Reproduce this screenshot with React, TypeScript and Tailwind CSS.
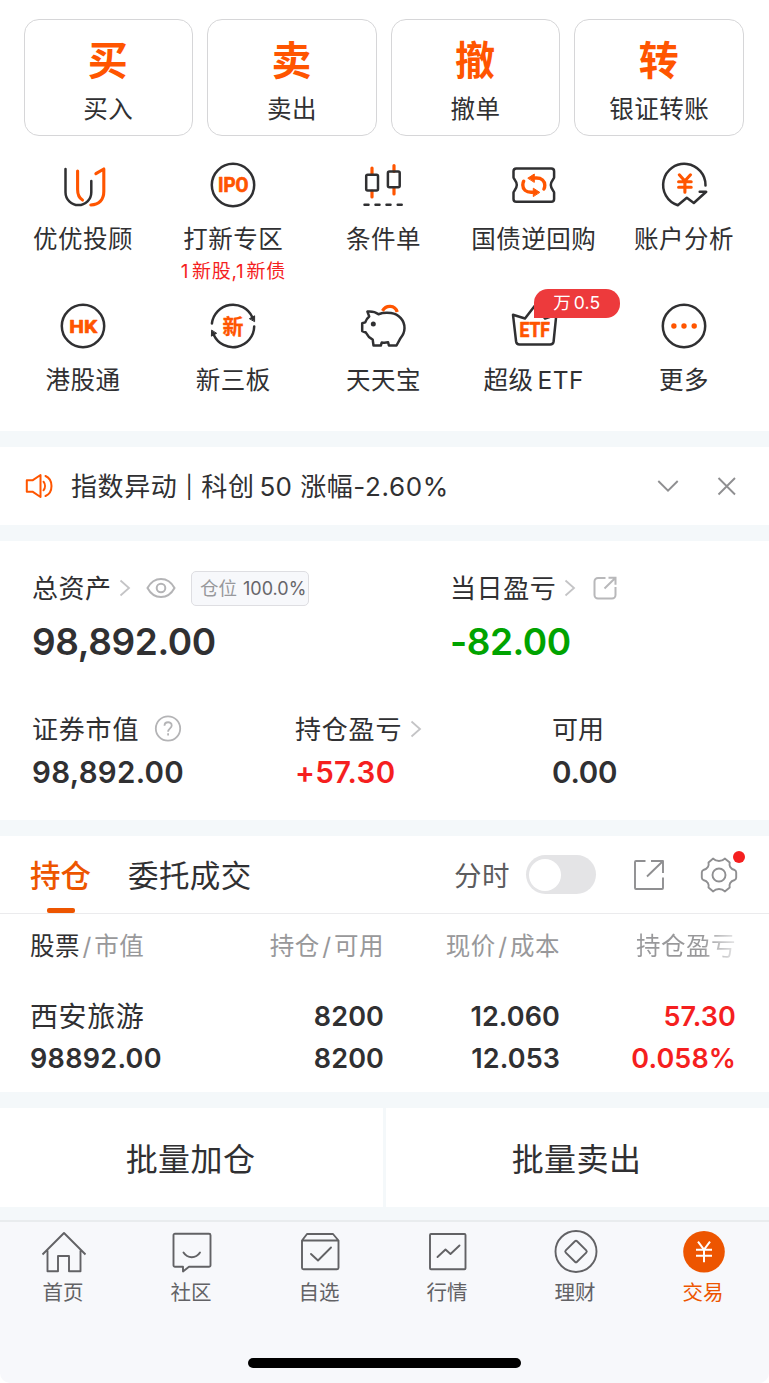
import React from "react";

const INK = "#303032";
const ORANGE = "#ff5500";

type Kids = { children: React.ReactNode };

function Glyph({ children }: Kids) {
  return (
    <svg
      viewBox="0 0 48 48"
      className="block size-12 shrink-0"
      fill="none"
      stroke={INK}
      strokeWidth={2.5}
      strokeLinecap="round"
      strokeLinejoin="round"
    >
      {children}
    </svg>
  );
}

function GlyphText({ x = 24, y, size, width, weight = 0.7, children }: Kids & { x?: number; y: number; size: number; width: number; weight?: number }) {
  return (
    <text
      x={x}
      y={y}
      fontSize={size}
      textLength={width}
      lengthAdjust="spacingAndGlyphs"
      textAnchor="middle"
      fill={ORANGE}
      stroke={ORANGE}
      strokeWidth={weight}
      fontWeight={700}
      fontFamily="Roboto, 'Noto Sans CJK SC', sans-serif"
    >
      {children}
    </text>
  );
}

const icons = {
  advisor: (
    <Glyph>
      <path d="M6.5 8v23.2a12.9 12.9 0 0 0 25.8 0V20" />
      <g stroke={ORANGE} strokeWidth={3.1}>
        <path d="M18.6 10v18.5c0 5 1.5 8.5 4.9 10.5" />
        <path d="M36.9 12.6 44.8 8v22.5c0 8-4.5 13-13 13.5" />
      </g>
    </Glyph>
  ),
  ipo: (
    <Glyph>
      <circle cx="24" cy="24" r="21.2" />
      <GlyphText x={24.2} y={30.9} size={19.5} width={30.5}>IPO</GlyphText>
    </Glyph>
  ),
  condition: (
    <Glyph>
      <g stroke={ORANGE} strokeWidth={3.2}>
        <path d="M13 7v6M13 30v6M35 4.500v6M35 27v6" />
      </g>
      <rect x="7.2" y="13.8" width="11.8" height="15.6" rx="1.5" />
      <rect x="28.9" y="10.6" width="11.8" height="15.6" rx="1.5" />
      <path d="M5.500 43.700h4M16.500 43.700h4M27.500 43.700h4M38.700 43.700h4" />
    </Glyph>
  ),
  bond: (
    <Glyph>
      <path d="M6.300 7.500h35a2.800 2.800 0 0 1 2.800 2.800v6.200c0 1.200-3.300 3.500-3.300 7.500s3.300 6.300 3.300 7.500v6.400a2.800 2.800 0 0 1-2.800 2.800h-35A2.800 2.800 0 0 1 3.500 37.900v-6.400c0-1.200 3.300-3.500 3.300-7.500S3.500 17.700 3.500 16.500v-6.200a2.800 2.800 0 0 1 2.800-2.800Z" />
      <g stroke={ORANGE} strokeWidth={3.4}>
        <path d="M25 17h1.500c5 0 8.300 3 8.300 7.300 0 1.500-.3 2.700-.9 3.700" />
        <path d="M22.600 31.200h-1.500c-5 0-8.300-3-8.300-7.300 0-1.500.3-2.700.9-3.700" />
        <path fill={ORANGE} strokeWidth={1} d="m18.100 17 6.200-4v8ZM29.500 31.200l-6.200-4v8Z" />
      </g>
    </Glyph>
  ),
  analysis: (
    <Glyph>
      <path d="M45.500 24.500A21.200 21.200 0 1 0 17.800 44.200l9-7.400 7 5.200 12.400-11.200h-6.500" />
      <path stroke={ORANGE} strokeWidth={3.1} d="m19.300 13.800 5.500 6.200 5.700-6.200M18.600 20.800h12.600M18.600 26.200h12.600M24.900 20.500v10.700" />
    </Glyph>
  ),
  hk: (
    <Glyph>
      <circle cx="24" cy="24" r="21.2" />
      <GlyphText x={24.2} y={30.8} size={19} width={28}>HK</GlyphText>
    </Glyph>
  ),
  otc: (
    <Glyph>
      <path d="M2.900 21.500A21.200 21.200 0 0 1 43.200 15M45.200 24.500A21.200 21.200 0 0 1 4.800 33" />
      <path fill={INK} strokeWidth={1} d="m40.700 16.500 4.900-2.700v5.500ZM7.300 31.500 2.400 34.200l.2-5.700Z" />
      <GlyphText y={31.5} size={21} width={21} weight={0.3}>新</GlyphText>
    </Glyph>
  ),
  piggy: (
    <Glyph>
      <path d="M19.500 12.200c4-1.400 8.500-1.600 12.500-1.100 8 1 13.600 7.500 13.500 15.100-.1 4-1.500 7-4 10l-4 7.300h-7.600l-.8-3.200c-2 .4-4.300.5-6.300.2l-1 3h-7.300l-.8-5.800c-3.200-1.700-5.300-4-6.900-7.200L3.200 29v-7.700l3-.9c.8-2.500 2-4.400 4-6L8.400 9.600c4.300-.4 8 .3 11.100 2.600Z" />
      <circle cx="14.3" cy="22" r="2.5" fill={INK} stroke="none" />
      <path stroke={ORANGE} strokeWidth={3.3} strokeLinecap="butt" d="M23.500 8.800c3.500-6 12.500-6 14.700 1.300" />
    </Glyph>
  ),
  etf: (
    <Glyph>
      <path d="m3 12.800 12 3.700L25 3.500l10 13 11.300-3.700-2.700 26.700a3.500 3.500 0 0 1-3.500 3H9.600a3.500 3.500 0 0 1-3.500-3Z" />
      <GlyphText x={24.7} y={35.4} size={19.8} width={30.5}>ETF</GlyphText>
    </Glyph>
  ),
  more: (
    <Glyph>
      <circle cx="24" cy="24" r="21.2" />
      <g fill={ORANGE} stroke="none">
        <circle cx="13.9" cy="24" r="2.7" />
        <circle cx="24" cy="24" r="2.7" />
        <circle cx="34.2" cy="24" r="2.7" />
      </g>
    </Glyph>
  ),
};

type Shortcut = { icon: React.ReactNode; label: React.ReactNode; note?: React.ReactNode; badge?: React.ReactNode };

const shortcuts: Shortcut[][] = [
  [
    { icon: icons.advisor, label: "优优投顾" },
    {
      icon: icons.ipo,
      label: "打新专区",
      note: <><span className="mr-[3px]">1</span>新股,<span className="mr-[2px]">1</span>新债</>,
    },
    { icon: icons.condition, label: "条件单" },
    { icon: icons.bond, label: "国债逆回购" },
    { icon: icons.analysis, label: "账户分析" },
  ],
  [
    { icon: icons.hk, label: "港股通" },
    { icon: icons.otc, label: "新三板" },
    { icon: icons.piggy, label: "天天宝" },
    {
      icon: icons.etf,
      label: <>超级<span className="ml-[4px] tracking-[0.5px]">ETF</span></>,
      badge: <>万<span className="ml-[3px]">0.5</span></>,
    },
    { icon: icons.more, label: "更多" },
  ],
];

const actions = [
  ["买", "买入"],
  ["卖", "卖出"],
  ["撤", "撤单"],
  ["转", "银证转账"],
];

function Gap() {
  return <div className="h-4 shrink-0 bg-[#f4f8fa]" />;
}

function Chevron() {
  return (
    <svg viewBox="0 0 12 18" className="block h-[18px] w-3 shrink-0" fill="none" stroke="#c4c4c6" strokeWidth={1.8}>
      <path d="m1.500 1.500 8.500 7.500-8.500 7.500" />
    </svg>
  );
}

function Actions() {
  return (
    <div className="grid grid-cols-4 gap-3.5 pr-[25px] pl-[23.5px]">
      {actions.map(([big, label]) => (
        <div key={big} className="flex h-[117px] flex-col items-center rounded-[15px] border border-[#d6d6d8] pt-[19px]">
          <div className="h-11 pr-px text-[40px] leading-[44px] font-bold text-[#ff5500]">{big}</div>
          <div className="mt-2.5 h-8 text-[24.5px] leading-8 tracking-[0.5px]">{label}</div>
        </div>
      ))}
    </div>
  );
}

function Shortcuts() {
  return (
    <>
      {shortcuts.map((row, i) => (
        <div key={i} className="grid h-[141px] grid-cols-5 pr-[10px] pl-2">
          {row.map((s, j) => (
            <div key={j} className="flex flex-col items-center">
              <div className="relative">
                {s.icon}
                {s.badge && (
                  <div className="absolute top-[-13px] left-6 flex h-[29px] w-[86px] items-center justify-center rounded-[14px] rounded-bl-none bg-[#ed3a3c] text-[17.5px] tracking-[0.1px] text-white">
                    {s.badge}
                  </div>
                )}
              </div>
              <div className="mt-[14px] h-8 text-[24.5px] leading-8 tracking-[0.5px] whitespace-nowrap">{s.label}</div>
              {s.note && <div className="mt-[3px] h-7 text-[19px] leading-7 tracking-[0.7px] text-[#f51f1f]">{s.note}</div>}
            </div>
          ))}
        </div>
      ))}
    </>
  );
}

function Notice() {
  return (
    <div className="flex h-[78px] items-center pr-[32px] pl-[25px]">
      <svg viewBox="0 0 28 26" className="block h-[26px] w-7" fill="none" stroke={ORANGE} strokeWidth={2} strokeLinejoin="round">
        <path d="M1.800 7.300h5.700l8-5.300v22l-8-5.300H1.800Z" />
        <path strokeLinecap="round" d="M18.500 8.700c2 2.500 2 6.100 0 8.600M20.500 3c8 3.500 8 16.500 0 20" />
      </svg>
      <div className="flex h-8 grow items-center pt-0.5 pl-[18px] text-[26px] leading-8 tracking-[0.6px] whitespace-nowrap">
        <span>指数异动</span>
        <span className="mx-[8px] text-[22px]">|</span>
        <span>科创</span>
        <span className="ml-[5px] tracking-[0.2px]">50</span>
        <span className="ml-[8px]">涨幅</span>
        <span className="tracking-[0.6px]">-2.60%</span>
      </div>
      <svg viewBox="0 0 22 14" className="mr-[38px] h-3.5 w-[22px]" fill="none" stroke="#8f8f91" strokeWidth={1.9}>
        <path d="m1.300 2 9.700 9.700L20.700 2" />
      </svg>
      <svg viewBox="0 0 20 20" className="size-5" fill="none" stroke="#8f8f91" strokeWidth={1.9}>
        <path d="m1.500 2 16.500 16.500M18 2 1.500 18.500" />
      </svg>
    </div>
  );
}

function Assets() {
  return (
    <div className="h-[279px] pt-[29px] pl-8">
      <div className="flex">
        <div className="w-[418px]">
          <div className="flex h-9 items-center">
            <span className="text-[26px] tracking-[0.5px]">总资产</span>
            <span className="ml-[7px]"><Chevron /></span>
            <svg viewBox="0 0 30 24" className="ml-[15px] h-6 w-[30px]" fill="none" stroke="#b4b4b6" strokeWidth={2}>
              <path d="M1.500 12C5 5.500 10 3 15 3s10 2.500 13.500 9C25 18.500 20 21 15 21S5 18.500 1.500 12Z" />
              <circle cx="15" cy="12" r="4.3" />
            </svg>
            <div className="ml-[15.5px] flex h-[35px] w-[118px] items-center rounded-[5px] border border-[#dedee2] bg-[#f7f8fb] pl-2 text-[18.5px] whitespace-nowrap text-[#66666a]">
              <span className="pt-px text-[#98989c]">仓位</span>
              <span className="ml-[6px] text-[18px]">100.0%</span>
            </div>
          </div>
          <div className="mt-3 h-12 text-[37px] leading-[48px] font-semibold tracking-[-0.4px]">98,892.00</div>
        </div>
        <div>
          <div className="flex h-9 items-center">
            <span className="text-[26px] tracking-[0.6px]">当日盈亏</span>
            <span className="ml-2"><Chevron /></span>
            <svg viewBox="0 0 24 24" className="ml-[17px] size-6" fill="none" stroke="#b8b8ba" strokeWidth={2}>
              <path d="M12.500 2H5a3.500 3.500 0 0 0-3.500 3.500v13.500A3.500 3.500 0 0 0 5 22.500h14a3.500 3.500 0 0 0 3.500-3.500v-8M15.500 1.800h7v7M22 2.300 11.500 12.500" />
            </svg>
          </div>
          <div className="mt-3 h-12 text-[37px] leading-[48px] font-semibold tracking-[-0.5px] text-[#00a300]">-82.00</div>
        </div>
      </div>
      <div className="mt-[45px] flex">
        <div className="w-[263px]">
          <div className="flex h-9 items-center">
            <span className="text-[26px] tracking-[0.8px]">证券市值</span>
            <svg viewBox="0 0 28 28" className="ml-[15px] size-7" fill="none" stroke="#b4b4b6" strokeWidth={1.8}>
              <circle cx="14" cy="13.5" r="12.2" />
              <path d="M10.500 10.700c0-4.600 7.200-4.500 7.200-.2 0 2.700-3.600 3-3.600 6.200M14.100 18.300v2.200" />
            </svg>
          </div>
          <div className="mt-[5px] h-10 text-[29.5px] leading-10 font-semibold tracking-[0.3px]">98,892.00</div>
        </div>
        <div className="w-[257px]">
          <div className="flex h-9 items-center">
            <span className="text-[26px] tracking-[0.8px]">持仓盈亏</span>
            <span className="ml-2"><Chevron /></span>
          </div>
          <div className="mt-[5px] h-10 text-[29.5px] leading-10 font-semibold tracking-[0.3px] text-[#f51f1f]">+57.30</div>
        </div>
        <div>
          <div className="flex h-9 items-center text-[26px]">可用</div>
          <div className="mt-[5px] h-10 text-[29.5px] leading-10 font-semibold tracking-[-0.2px]">0.00</div>
        </div>
      </div>
    </div>
  );
}

function Tabs() {
  return (
    <div className="flex h-[78px] items-center border-b border-[#ebebed] pr-[31px] pl-[30px]">
      <div className="relative flex h-full items-center pt-[2px] text-[30.5px] font-medium text-[#ed5500]">
        持仓
        <span className="absolute bottom-0 left-[17px] h-[5px] w-7 rounded-[2px] bg-[#ed5500]" />
      </div>
      <div className="ml-[37px] pt-[3px] text-[30.5px] tracking-[0.4px]">委托成交</div>
      <div className="ml-auto pt-[4px] text-[27.5px] tracking-[0.5px] text-[#5c5c5e]">分时</div>
      <div className="ml-4 flex h-[39px] w-[70px] items-center rounded-full bg-[#e4e4e6] pl-[3px]">
        <span className="size-8 rounded-full bg-white" />
      </div>
      <svg viewBox="0 0 32 32" className="ml-[37px] size-8" fill="none" stroke="#8f8f91" strokeWidth={1.9} strokeLinejoin="round">
        <path d="M12.500 2H3a1 1 0 0 0-1 1v26a1 1 0 0 0 1 1h26a1 1 0 0 0 1-1V18.500M18 2h12v12M29.500 2.500 14 17.500" />
      </svg>
      <div className="relative ml-[35px]">
        <svg viewBox="0 0 38 38" className="size-[38px]" fill="none" stroke="#8f8f91" strokeWidth={1.9} strokeLinejoin="round">
          <path d="M8.500 6.500 13.200 2.600C15 4.600 17 5 19 5s4-.4 5.800-2.400l4.900 3.900c-.7 3 .4 6.500 5 7.500a3 3 0 0 1 1.500 2.500v5a3 3 0 0 1-1.500 2.500c-4.600 1-5.700 4.500-5 7.500l-4.900 3.900C23 33.400 21 33 19 33s-4 .4-5.800 2.400l-4.700-3.900c.7-3-.6-6.500-5.200-7.500a3 3 0 0 1-1.500-2.500v-5a3 3 0 0 1 1.500-2.500c4.600-1 5.900-4.500 5.200-7.500Z" />
          <circle cx="19" cy="19" r="6.5" />
        </svg>
        <span className="absolute top-[-5px] right-[-7px] size-3 rounded-full bg-[#f51f1f]" />
      </div>
    </div>
  );
}

function Slash() {
  return <span className="mx-[2.5px]">/</span>;
}

function Holdings() {
  return (
    <div className="h-[178px] pr-[32px] pl-[30px]">
      <div className="grid h-[65px] grid-cols-[177px_177px_177px_176px] items-center text-[24.5px] tracking-[0.5px] whitespace-nowrap text-[#98989a]">
        <div><span className="text-[#303032]">股票</span><Slash />市值</div>
        <div className="text-right">持仓<Slash />可用</div>
        <div className="pr-px text-right">现价<Slash />成本</div>
        <div className="bg-linear-to-r from-[#98989a] from-80% to-[#e9e9ea] bg-clip-text pr-px text-right text-transparent">持仓盈亏</div>
      </div>
      <div className="mt-[17px] grid grid-cols-[177px_177px_177px_175px] text-[27px] leading-[42px] font-semibold tracking-[0.1px]">
        <div className="text-[28px] font-normal tracking-[0.6px]">西安旅游</div>
        <div className="text-right">8200</div>
        <div className="pr-px text-right">12.060</div>
        <div className="text-right text-[#f51f1f]">57.30</div>
        <div className="tracking-[0.3px]">98892.00</div>
        <div className="text-right">8200</div>
        <div className="pr-px text-right">12.053</div>
        <div className="text-right text-[#f51f1f]">0.058%</div>
      </div>
    </div>
  );
}

function Batch() {
  return (
    <div className="grid h-[99px] grid-cols-[383px_383px] gap-[3px] bg-[#f4f8fa] text-[32px] tracking-[0.4px]">
      <div className="flex items-center justify-center bg-white pt-1 pr-0.5">批量加仓</div>
      <div className="flex items-center justify-center bg-white pt-1 pr-0.5">批量卖出</div>
    </div>
  );
}

const nav: { label: string; active?: boolean; art: React.ReactNode }[] = [
  {
    label: "首页",
    art: <path d="M2.500 25.500 24 4l21.500 21.500M7.500 21.500v20.700H18V27h11v15.200h11.500V21.500" />,
  },
  {
    label: "社区",
    art: (
      <>
        <path d="M7 4.700h34a1.500 1.500 0 0 1 1.500 1.500v30a1.500 1.500 0 0 1-1.500 1.500H21l-6 4.800v-4.800H7a1.500 1.500 0 0 1-1.500-1.500v-30A1.500 1.500 0 0 1 7 4.700Z" />
        <path strokeLinecap="round" d="M15.500 23.500c4 6.300 12.500 6.300 16.500 0" />
      </>
    ),
  },
  {
    label: "自选",
    art: (
      <>
        <path d="M6 11.500 11 5h26l5.500 6.500V38.700a1.500 1.500 0 0 1-1.500 1.500H7.500A1.500 1.500 0 0 1 6 38.700ZM6 11.500h36.500" />
        <path strokeLinecap="round" d="m15 25 7 6.500L35 18.500" />
      </>
    ),
  },
  {
    label: "行情",
    art: (
      <>
        <rect x="6" y="5" width="35.5" height="35.2" rx="1" />
        <path strokeLinecap="round" d="m13.500 28 8-7.500 5 4.500 9-8.500" />
      </>
    ),
  },
  {
    label: "理财",
    art: (
      <>
        <circle cx="24" cy="22.5" r="20.5" />
        <rect x="16" y="14.5" width="16" height="16" rx="1.5" transform="rotate(45 24 22.5)" />
      </>
    ),
  },
  {
    label: "交易",
    active: true,
    art: (
      <>
        <circle cx="24" cy="22.7" r="20.8" fill="#ed5500" stroke="none" />
        <path stroke="#fff" strokeWidth={2} d="m18 12.700 6 8 6-8M16 20.700h16M16 26.700h16M24 20.700v12.500" />
      </>
    ),
  },
];

function NavBar() {
  return (
    <div className="flex h-[163px] flex-col items-center rounded-b-[10px] border-t-2 border-[#e9ecee] bg-[#f7f8fb]">
      <div className="grid w-full grid-cols-6 pr-px pt-[7px]">
        {nav.map((n) => (
          <div key={n.label} className={n.active ? "flex flex-col items-center text-[#ed5500]" : "flex flex-col items-center text-[#626265]"}>
            <svg viewBox="0 0 48 48" className="size-12" fill="none" stroke="currentColor" strokeWidth={1.9} strokeLinejoin="round">
              {n.art}
            </svg>
            <div className="mt-0.5 h-7 pr-[2px] text-[20.5px] leading-7">{n.label}</div>
          </div>
        ))}
      </div>
      <div className="mt-[51px] mr-px h-2.5 w-[273px] rounded-full bg-black" />
    </div>
  );
}

export default function App() {
  return (
    <div className="flex h-[1383px] w-[769px] flex-col overflow-hidden bg-white font-['Inter','Noto_Sans_CJK_SC',sans-serif] text-[#303032]">
      <div className="h-[431px] pt-[19px]">
        <Actions />
        <div className="mt-[25px]">
          <Shortcuts />
        </div>
      </div>
      <Gap />
      <Notice />
      <Gap />
      <Assets />
      <Gap />
      <Tabs />
      <Holdings />
      <Gap />
      <Batch />
      <div className="h-[13px] shrink-0 bg-[#f4f8fa]" />
      <NavBar />
    </div>
  );
}
